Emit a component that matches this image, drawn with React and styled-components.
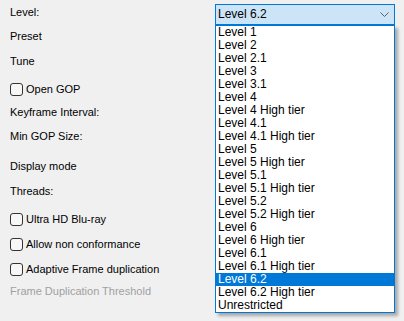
import React from 'react';
import styled, { createGlobalStyle } from 'styled-components';

const levels = [
    'Level 1',
    'Level 2',
    'Level 2.1',
    'Level 3',
    'Level 3.1',
    'Level 4',
    'Level 4 High tier',
    'Level 4.1',
    'Level 4.1 High tier',
    'Level 5',
    'Level 5 High tier',
    'Level 5.1',
    'Level 5.1 High tier',
    'Level 5.2',
    'Level 5.2 High tier',
    'Level 6',
    'Level 6 High tier',
    'Level 6.1',
    'Level 6.1 High tier',
    'Level 6.2',
    'Level 6.2 High tier',
    'Unrestricted',
];

const GlobalStyle = createGlobalStyle`
    html, body {
        margin: 0;
        padding: 0;
        background: #f0f0f0;
    }
    body {
        font-family: "Liberation Sans", Arial, sans-serif;
        font-size: 11px;
        color: #000;
    }
`;

const Panel = styled.div`
    width: 404px;
    height: 321px;
    padding: 4px 0 0 10px;
    box-sizing: border-box;
    display: flex;
    flex-direction: column;
    overflow: hidden;
`;

const Row = styled.div`
    display: grid;
    grid-template-columns: 205px 180px;
    align-items: start;
    margin-top: ${props => props.$mt || 0}px;
    height: ${props => props.$h || 16}px;
`;

const Label = styled.span`
    line-height: 16px;
    white-space: nowrap;
    color: ${props => (props.$disabled ? '#a0a0a0' : '#000')};
`;

const Check = styled.label`
    display: flex;
    align-items: center;
    gap: 3px;
    height: 16px;
    white-space: nowrap;
`;

const Box = styled.span`
    width: 11px;
    height: 11px;
    border: 1px solid #333;
    border-radius: 3px;
    background: #f7f7f7;
    flex: none;
`;

const ComboWrap = styled.div`
    position: relative;
`;

const Combo = styled.div`
    height: 21px;
    box-sizing: border-box;
    border: 1px solid #0078d7;
    background: #cce4f7;
    display: flex;
    align-items: center;
    justify-content: space-between;
    padding: 0 5px 0 2px;
    font-size: 12px;
    line-height: 19px;
`;

const DropList = styled.ul`
    position: absolute;
    top: 21px;
    left: 0;
    width: 180px;
    margin: 0;
    padding: 0;
    list-style: none;
    box-sizing: border-box;
    border: 1px solid #0078d7;
    background: #fff;
    box-shadow: 3px 3px 3px rgba(0, 0, 0, 0.3);
    z-index: 2;
`;

const Item = styled.li`
    height: 13px;
    line-height: 13px;
    padding-left: 2px;
    font-size: 12px;
    white-space: nowrap;
    background: ${props => (props.$active ? '#0078d7' : 'transparent')};
    color: ${props => (props.$active ? '#fff' : '#000')};
`;

function Chevron() {
    return (
        <svg width="9" height="5" viewBox="0 0 9 5">
            <polyline points="0.5,0.5 4.5,4.5 8.5,0.5" fill="none" stroke="#606060" strokeWidth="1" />
        </svg>
    );
}

function CheckRow({ mt, children }) {
    return (
        <Row $mt={mt}>
            <Check>
                <Box />
                {children}
            </Check>
        </Row>
    );
}

export default function App() {
    const current = 'Level 6.2';
    return (
        <>
            <GlobalStyle />
            <Panel>
                <Row $h={21}>
                    <Label>Level:</Label>
                    <ComboWrap>
                        <Combo>
                            <span>{current}</span>
                            <Chevron />
                        </Combo>
                        <DropList>
                            {levels.map(l => (
                                <Item key={l} $active={l === current}>
                                    {l}
                                </Item>
                            ))}
                        </DropList>
                    </ComboWrap>
                </Row>
                <Row $mt={3}>
                    <Label>Preset</Label>
                </Row>
                <Row $mt={9}>
                    <Label>Tune</Label>
                </Row>
                <CheckRow mt={12}>Open GOP</CheckRow>
                <Row $mt={7}>
                    <Label>Keyframe Interval:</Label>
                </Row>
                <Row $mt={8}>
                    <Label>Min GOP Size:</Label>
                </Row>
                <Row $mt={14}>
                    <Label>Display mode</Label>
                </Row>
                <Row $mt={9}>
                    <Label>Threads:</Label>
                </Row>
                <CheckRow mt={12}>Ultra HD Blu-ray</CheckRow>
                <CheckRow mt={9}>Allow non conformance</CheckRow>
                <CheckRow mt={9}>Adaptive Frame duplication</CheckRow>
                <Row $mt={6}>
                    <Label $disabled>Frame Duplication Threshold</Label>
                </Row>
            </Panel>
        </>
    );
}
